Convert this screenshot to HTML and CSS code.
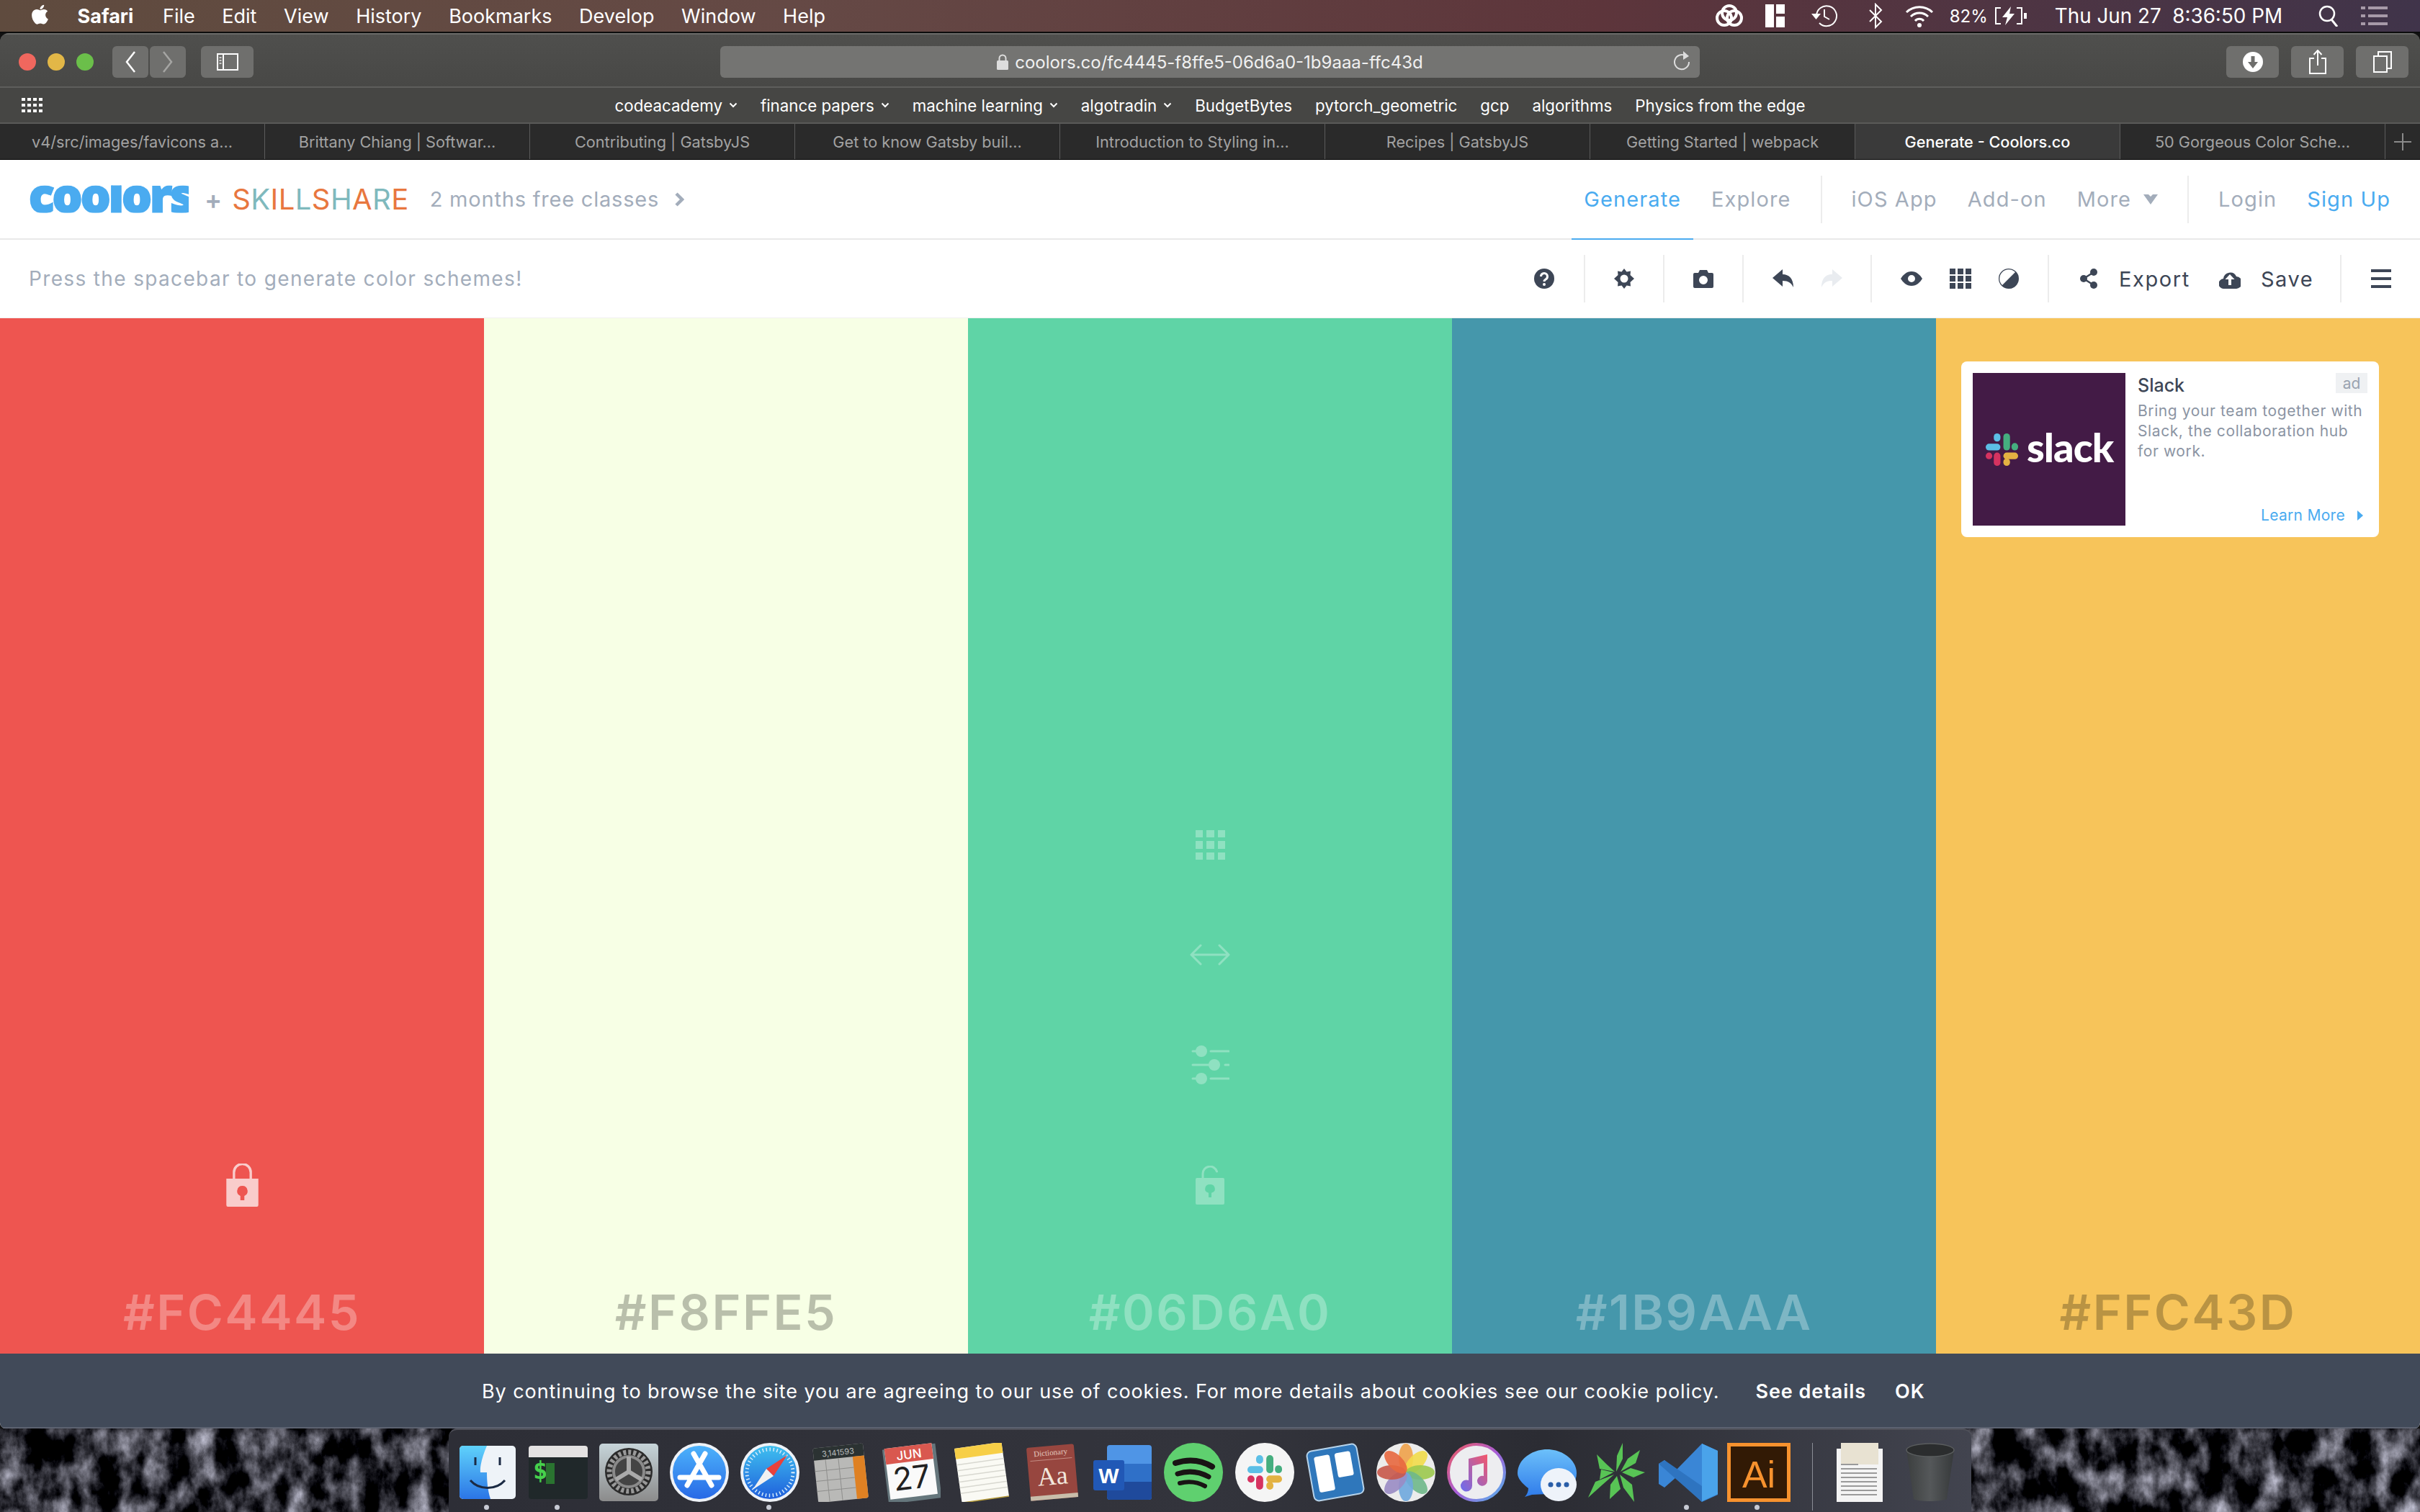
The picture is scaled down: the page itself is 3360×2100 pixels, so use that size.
FILE: index.html
```html
<!DOCTYPE html>
<html lang="en">
<head>
<meta charset="utf-8">
<title>Generate - Coolors.co</title>
<link rel="stylesheet" href="styles.css">
</head>
<body>
<svg class="defs" width="0" height="0" aria-hidden="true">
  <symbol id="slackmark" viewBox="0 0 44 44">
    <rect x="0" y="14" width="20" height="9" rx="4.5" fill="#5cbfe6"/><rect x="11" y="0" width="9" height="11" rx="4.5" fill="#5cbfe6"/>
    <rect x="24" y="0" width="9" height="23" rx="4.5" fill="#45ae7f"/><rect x="35" y="13" width="9" height="10" rx="4.5" fill="#45ae7f"/>
    <rect x="0" y="26" width="9" height="9" rx="4.5" fill="#d63360"/><rect x="11" y="26" width="9" height="18" rx="4.5" fill="#d63360"/>
    <rect x="24" y="26" width="20" height="9" rx="4.5" fill="#e3b242"/><rect x="24" y="34" width="9" height="10" rx="4.5" fill="#e3b242"/>
  </symbol>
  <symbol id="chev" viewBox="0 0 12 8"><path d="M1.5 1.5 6 6l4.5-4.5" fill="none" stroke="currentColor" stroke-width="2"/></symbol>
</svg>

<header class="menubar">
  <div class="menu-left">
    <svg class="apple" viewBox="3 3 18 18.5" width="27" height="31"><path fill="#fff" d="M17.05 20.28c-.98.95-2.05.8-3.08.35-1.09-.46-2.09-.48-3.24 0-1.44.62-2.2.44-3.06-.35C2.79 15.25 3.51 7.59 9.05 7.31c1.35.07 2.29.74 3.08.8 1.18-.24 2.31-.93 3.57-.84 1.51.12 2.65.72 3.4 1.8-3.12 1.87-2.38 5.98.48 7.13-.57 1.5-1.31 2.99-2.54 4.09zM12.03 7.25c-.15-2.23 1.66-4.07 3.74-4.25.29 2.58-2.34 4.5-3.74 4.25z"/></svg>
    <span class="menu-app">Safari</span><span>File</span><span>Edit</span><span>View</span><span>History</span><span>Bookmarks</span><span>Develop</span><span>Window</span><span>Help</span>
  </div>
  <div class="menu-right">
    <svg width="40" height="34" viewBox="0 0 40 34"><g fill="none" stroke="#fff" stroke-width="4"><circle cx="13" cy="20" r="10"/><circle cx="27" cy="20" r="10"/><circle cx="20" cy="13" r="10"/></g></svg>
    <svg class="s-layout" width="27" height="32" viewBox="0 0 27 32"><path fill="#fff" d="M0 0h12v32H0zM15 0h12v13H15zM15 17h12v15H15z"/></svg>
    <svg class="s-tm" width="38" height="34" viewBox="0 0 38 34"><path d="M8 17a14 14 0 1 1 4 10M19 8v10l7 4" fill="none" stroke="#fff" stroke-width="2"/><path d="M1 14h13l-6.500 8z" fill="#fff"/></svg>
    <svg class="s-bt" width="20" height="36" viewBox="0 0 20 36"><path d="M2 10l16 16-8 8V2l8 8L2 26" fill="none" stroke="#fff" stroke-width="2"/></svg>
    <svg class="s-wifi" width="40" height="34" viewBox="0 0 40 34"><g fill="none" stroke="#fff" stroke-width="3"><path d="M2 12a26 26 0 0 1 36 0"/><path d="M8 18a17 17 0 0 1 24 0"/><path d="M14 24a8 8 0 0 1 12 0"/></g><circle cx="20" cy="30" r="3" fill="#fff"/></svg>
    <span class="s-pct">82%</span>
    <svg class="s-batt" width="46" height="26" viewBox="0 0 46 26"><path d="M9 2H2v22h7M31 2h7v22h-7" fill="none" stroke="#fff" stroke-width="2"/><path d="M41 9h4v8h-4z" fill="#fff"/><path d="M23 0 11 15h7l-3 11 13-16h-7z" fill="#fff"/></svg>
    <span class="s-date">Thu Jun 27&nbsp;&nbsp;8:36:50 PM</span>
    <svg class="s-search" width="28" height="30" viewBox="0 0 28 30"><circle cx="12" cy="12" r="10" fill="none" stroke="#fff" stroke-width="2.500"/><path d="M18 20l8 10" stroke="#fff" stroke-width="3"/></svg>
    <svg class="s-list" width="37" height="26" viewBox="0 0 37 26"><path fill="#a79aa8" d="M0 0h6v4H0zM10 0h27v4H10zM0 11h6v4H0zM10 11h27v4H10zM0 22h6v4H0zM10 22h27v4H10z"/></svg>
  </div>
</header>

<div class="window">
  <div class="toolbar">
    <div class="tb-left">
      <i class="light red"></i><i class="light yellow"></i><i class="light green"></i>
      <button class="tb-btn nav-back"><svg width="16" height="32" viewBox="0 0 16 32"><path d="M14 2 3 16l11 14" fill="none" stroke="#fff" stroke-width="2.500"/></svg></button>
      <button class="tb-btn nav-fwd"><svg width="16" height="32" viewBox="0 0 16 32"><path d="M2 2l11 14L2 30" fill="none" stroke="#a5a5a3" stroke-width="2.500"/></svg></button>
      <button class="tb-btn wide side"><svg width="30" height="24" viewBox="0 0 30 24"><path d="M1 1h28v22H1zM9 1v22" fill="none" stroke="#fff" stroke-width="2"/><path d="M3.500 5h3v2h-3zM3.500 9h3v2h-3zM3.500 13h3v2h-3z" fill="#ccc"/></svg></button>
    </div>
    <div class="url">
      <svg width="16" height="22" viewBox="0 0 16 22"><path d="M3.500 10V6a4.500 4.500 0 0 1 9 0v4" fill="none" stroke="#ddd" stroke-width="2"/><rect y="9" width="16" height="13" rx="1.500" fill="#ddd"/></svg>
      <span>coolors.co/fc4445-f8ffe5-06d6a0-1b9aaa-ffc43d</span>
      <svg class="reload" width="24" height="28" viewBox="0 0 24 28"><path d="M16 6.500A10 10 0 1 0 21 15" fill="none" stroke="#ddd" stroke-width="2"/><path d="M13 0l8 7-8 5z" fill="#ddd"/></svg>
    </div>
    <div class="tb-right">
      <button class="tb-btn wide"><svg width="28" height="28" viewBox="0 0 28 28"><circle cx="14" cy="14" r="14" fill="#fff"/><path d="M11.500 6h5v8H21l-7 9-7-9h4.500z" fill="#6e6e6c"/></svg></button>
      <button class="tb-btn wide"><svg width="24" height="34" viewBox="0 0 24 34"><path d="M7 12H1v21h22V12h-6M12 22V2M6.500 7 12 1l5.500 6" fill="none" stroke="#fff" stroke-width="2"/></svg></button>
      <button class="tb-btn wide"><svg width="26" height="30" viewBox="0 0 26 30"><path d="M7 6V1h18v23h-6M1 7h18v22H1z" fill="none" stroke="#fff" stroke-width="2"/></svg></button>
    </div>
  </div>

  <div class="bookmarks">
    <svg class="bm-grid" width="30" height="20" viewBox="0 0 30 20"><path fill="#fff" d="M0 0h5v4H0zM8 0h5v4H8zM16 0h5v4h-5zM24 0h5v4h-5zM0 8h5v4H0zM8 8h5v4H8zM16 8h5v4h-5zM24 8h5v4h-5zM0 16h5v4H0zM8 16h5v4H8zM16 16h5v4h-5zM24 16h5v4h-5z"/></svg>
    <nav class="bm-list">
      <span>codeacademy<svg width="12" height="8"><use href="#chev"/></svg></span>
      <span>finance papers<svg width="12" height="8"><use href="#chev"/></svg></span>
      <span>machine learning<svg width="12" height="8"><use href="#chev"/></svg></span>
      <span>algotradin<svg width="12" height="8"><use href="#chev"/></svg></span>
      <span>BudgetBytes</span><span>pytorch_geometric</span><span>gcp</span><span>algorithms</span><span>Physics from the edge</span>
    </nav>
  </div>

  <div class="tabs">
    <div class="tab">v4/src/images/favicons a...</div>
    <div class="tab">Brittany Chiang | Softwar...</div>
    <div class="tab">Contributing | GatsbyJS</div>
    <div class="tab">Get to know Gatsby buil...</div>
    <div class="tab">Introduction to Styling in...</div>
    <div class="tab">Recipes | GatsbyJS</div>
    <div class="tab">Getting Started | webpack</div>
    <div class="tab active">Generate - Coolors.co</div>
    <div class="tab">50 Gorgeous Color Sche...</div>
    <div class="tab-add"><svg width="24" height="24" viewBox="0 0 24 24"><path d="M12 0v24M0 12h24" stroke="#8a8a8a" stroke-width="2"/></svg></div>
  </div>

  <main class="page">
    <div class="site-nav">
      <div class="brand">
        <span class="logo">coolors</span>
        <span class="plus">+</span>
        <span class="skill"><b class="o">S</b><b class="t">K</b><b class="o">I</b><b class="o">L</b><b class="t">L</b><b class="o">S</b><b class="t">H</b><b class="o">A</b><b class="t">R</b><b class="o">E</b></span>
        <span class="promo">2 months free classes</span>
        <svg class="promo-arrow" width="14" height="20" viewBox="0 0 14 20"><path d="M3 2l8 8-8 8" fill="none" stroke="#a3adbb" stroke-width="4.500"/></svg>
      </div>
      <nav class="site-links">
        <a class="link current">Generate</a><a class="link">Explore</a>
        <i class="vsep"></i>
        <a class="link">iOS App</a><a class="link">Add-on</a><a class="link">More<svg class="more-heart" width="20" height="14" viewBox="0 0 20 14"><path d="M0 0h7l3 3 3-3h7L10 14z" fill="#a3adbb"/></svg></a>
        <i class="vsep"></i>
        <a class="link">Login</a><a class="link blue">Sign Up</a>
      </nav>
    </div>

    <div class="tool-row">
      <span class="hint">Press the spacebar to generate color schemes!</span>
      <div class="tools">
        <div class="tg g-help"><svg width="28" height="28" viewBox="0 0 28 28"><circle cx="14" cy="14" r="14" fill="#3d4656"/><path d="M9.500 11a4.500 4.500 0 1 1 7 3.700c-1.500 1-2.500 1.600-2.500 3.300" fill="none" stroke="#fff" stroke-width="3"/><circle cx="14" cy="22" r="2" fill="#fff"/></svg></div>
        <div class="tg g-one"><svg width="28" height="28" viewBox="0 0 28 28"><path fill="#3d4656" fill-rule="evenodd" d="M14 0l3.500 4.500 5.500-1-.500 5.500L28 14l-5.500 5 .500 5.500-5.500-1L14 28l-3.500-4.500-5.500 1 .500-5.500L0 14l5.500-5-.500-5.500 5.500 1zM14 8.500a5.500 5.500 0 1 0 0 11 5.500 5.500 0 0 0 0-11z"/></svg></div>
        <div class="tg g-one"><svg width="28" height="25" viewBox="0 0 28 25"><path fill="#3d4656" fill-rule="evenodd" d="M9 0h10l2 4h5a2 2 0 0 1 2 2v17a2 2 0 0 1-2 2H2a2 2 0 0 1-2-2V6a2 2 0 0 1 2-2h5zM14 8a6 6 0 1 0 0 12 6 6 0 0 0 0-12z"/></svg></div>
        <div class="tg g-undo">
          <svg width="30" height="26" viewBox="0 0 30 26"><path fill="#3d4656" d="M14 0v7c9 0 15 6 15 18-3-6-7-9-15-9v8L0 12z"/></svg>
          <svg width="30" height="26" viewBox="0 0 30 26"><path fill="#e9ecf0" d="M16 0v7C7 7 1 13 1 25c3-6 7-9 15-9v8l14-12z"/></svg>
        </div>
        <div class="tg g-view">
          <svg width="30" height="20" viewBox="0 0 30 20"><path fill="#3d4656" fill-rule="evenodd" d="M15 0c7 0 12 5 15 10-3 5-8 10-15 10S3 15 0 10C3 5 8 0 15 0zm0 5a5 5 0 1 0 0 10 5 5 0 0 0 0-10z"/></svg>
          <svg width="30" height="28" viewBox="0 0 30 28"><path fill="#3d4656" d="M0 0h8v8H0zM11 0h8v8h-8zM22 0h8v8h-8zM0 10h8v8H0zM11 10h8v8h-8zM22 10h8v8h-8zM0 20h8v8H0zM11 20h8v8h-8zM22 20h8v8h-8z"/></svg>
          <svg width="28" height="28" viewBox="0 0 28 28"><path fill="#3d4656" fill-rule="evenodd" d="M14 0a14 14 0 1 1 0 28 14 14 0 0 1 0-28zM5 23 23 5A12 12 0 0 0 5 23z"/></svg>
        </div>
        <div class="tg g-actions">
          <svg class="ic-share" width="24" height="28" viewBox="0 0 24 28"><g fill="#3d4656"><circle cx="19" cy="5" r="5"/><circle cx="5" cy="14" r="5"/><circle cx="19" cy="23" r="5"/></g><path d="M19 5 5 14l14 9" fill="none" stroke="#3d4656" stroke-width="2.500"/></svg>
          <span class="act">Export</span>
          <svg class="ic-cloud" width="30" height="27" viewBox="0 0 30 27"><path fill="#3d4656" fill-rule="evenodd" d="M7 27a7 7 0 0 1-1-14 9.500 9.500 0 0 1 18-3 8.500 8.500 0 0 1-1 17zM15 7l-6.500 7H13v8h4v-8h4.500z"/></svg>
          <span class="act">Save</span>
        </div>
        <div class="tg g-menu"><svg width="28" height="26" viewBox="0 0 28 26"><path fill="#3d4656" d="M0 0h28v4H0zM0 11h28v4H0zM0 22h28v4H0z"/></svg></div>
      </div>
    </div>

    <section class="palette">
      <div class="col c1">
        <svg class="lock lock-on" width="45" height="60" viewBox="0 0 40 54"><path fill="#fff" fill-rule="evenodd" d="M8 19v-8a12 12 0 0 1 24 0v8h8v33a2 2 0 0 1-2 2H2a2 2 0 0 1-2-2V19zm3 0h18v-8a9 9 0 0 0-18 0zM20 28a6.500 6.500 0 0 0-2.500 12.500V46h5v-5.500A6.500 6.500 0 0 0 20 28z"/></svg>
        <div class="hex light-t">#FC4445</div>
      </div>
      <div class="col c2"><div class="hex dark-t">#F8FFE5</div></div>
      <div class="col c3">
        <svg class="tool t-grid" width="41" height="41" viewBox="0 0 41 41"><path fill="#fff" d="M0 0h10v10H0zM15 0h11v10H15zM31 0h10v10H31zM0 15h10v11H0zM15 15h11v11H15zM31 15h10v11H31zM0 31h10v10H0zM15 31h11v10H15zM31 31h10v10H31z"/></svg>
        <svg class="tool t-arrow" width="56" height="30" viewBox="0 0 56 30"><path d="M15 2 2 15l13 13M41 2l13 13-13 13M2 15h52" fill="none" stroke="#fff" stroke-width="3" stroke-linecap="round" stroke-linejoin="round"/></svg>
        <svg class="tool t-sliders" width="53" height="54" viewBox="0 0 53 54"><g stroke="#fff" stroke-width="3" stroke-linecap="round"><path d="M2 8h6M27 8h25M2 27h25M47 27h5M2 46h6M27 46h25"/></g><g fill="#fff"><circle cx="14" cy="8" r="8"/><circle cx="32" cy="27" r="8"/><circle cx="14" cy="46" r="8"/></g></svg>
        <svg class="tool t-lock" width="40" height="54" viewBox="0 0 40 54"><path d="M10 17v-6a10 10 0 0 1 19.500-3" fill="none" stroke="#fff" stroke-width="3" stroke-linecap="round"/><path fill="#fff" fill-rule="evenodd" d="M2 17h36a2 2 0 0 1 2 2v33a2 2 0 0 1-2 2H2a2 2 0 0 1-2-2V19a2 2 0 0 1 2-2zM20 26a7 6 0 0 0-2 11.700V44h4v-6.300A7 6 0 0 0 20 26z"/></svg>
        <div class="hex light-t">#06D6A0</div>
      </div>
      <div class="col c4"><div class="hex light-t">#1B9AAA</div></div>
      <div class="col c5">
        <aside class="ad">
          <div class="ad-img"><svg width="45" height="45"><use href="#slackmark"/></svg><span class="ad-slack">slack</span></div>
          <div class="ad-body">
            <div class="ad-head"><span class="ad-title">Slack</span><span class="ad-tag">ad</span></div>
            <p class="ad-desc">Bring your team together with<br>Slack, the collaboration hub<br>for work.</p>
            <div class="ad-more">Learn More<svg width="8" height="14" viewBox="0 0 8 14"><path d="M0 0l8 7-8 7z" fill="#4aabf0"/></svg></div>
          </div>
        </aside>
        <div class="hex dark-t">#FFC43D</div>
      </div>
    </section>

    <div class="cookie">
      <span>By continuing to browse the site you are agreeing to our use of cookies. For more details about cookies see our cookie policy.</span>
      <a class="ck-link">See details</a><a class="ck-link">OK</a>
    </div>
  </main>
</div>

<footer class="desk">
  <svg class="rock" width="3360" height="116" aria-hidden="true">
    <filter id="rockf" x="0" y="0" width="100%" height="100%" color-interpolation-filters="sRGB">
      <feTurbulence type="fractalNoise" baseFrequency=".03 .02" numOctaves="6" seed="23"/>
      <feColorMatrix type="matrix" values="1.5 0 0 0 -.58  1.5 0 0 0 -.58  1.6 0 0 0 -.6  0 0 0 0 1"/>
    </filter>
    <rect width="3360" height="116" filter="url(#rockf)"/>
  </svg>
  <div class="dock">
    <svg class="di" viewBox="0 0 82 82"><defs><linearGradient id="fb" x1="0" y1="0" x2="0" y2="1"><stop offset="0" stop-color="#5fd2fb"/><stop offset="1" stop-color="#2b75e6"/></linearGradient></defs><rect x="2" y="4" width="78" height="74" rx="5" fill="#eef3f8"/><path d="M7 4h33c-6 14-10 28-9 37h9c0 12 1 24 5 37H7a5 5 0 0 1-5-5V9a5 5 0 0 1 5-5z" fill="url(#fb)"/><path d="M24 20v11M58 20v11" stroke="#1b2a44" stroke-width="3"/><path d="M17 52c12 14 36 14 48 0" fill="none" stroke="#1b2a44" stroke-width="3"/></svg>
    <svg class="di" viewBox="0 0 82 82"><rect y="4" width="82" height="74" rx="4" fill="#20282a"/><path d="M4 4h74a4 4 0 0 1 4 4v12H0V8a4 4 0 0 1 4-4z" fill="#e4e2e2"/><text x="6" y="50" class="t-term">$</text><rect x="24" y="28" width="12" height="29" fill="#2a7430"/></svg>
    <svg class="di" viewBox="0 0 82 82"><defs><linearGradient id="sp" x1="0" y1="0" x2="0" y2="1"><stop offset="0" stop-color="#c6d4d9"/><stop offset="1" stop-color="#8b8b8b"/></linearGradient></defs><rect width="82" height="80" y="1" rx="5" fill="url(#sp)"/><circle cx="41" cy="40" r="33" fill="#2b2b2b"/><circle cx="41" cy="40" r="27" fill="none" stroke="#999" stroke-width="7" stroke-dasharray="4 3"/><circle cx="41" cy="40" r="21" fill="#444" stroke="#8a8a8a" stroke-width="4"/><path d="M41 40V19M41 40 23 51M41 40l18 11" stroke="#aaa" stroke-width="6"/></svg>
    <svg class="di" viewBox="0 0 82 82"><defs><linearGradient id="as" x1="0" y1="0" x2="0" y2="1"><stop offset="0" stop-color="#4cb2fb"/><stop offset="1" stop-color="#2869e6"/></linearGradient></defs><circle cx="41" cy="41" r="41" fill="#eef2f7"/><circle cx="41" cy="41" r="37" fill="url(#as)"/><path d="M33 15l25 44M49 15 24 59M14 48h54" stroke="#fff" stroke-width="7" stroke-linecap="round"/></svg>
    <svg class="di" viewBox="0 0 82 82"><defs><linearGradient id="sf" x1="0" y1="0" x2="0" y2="1"><stop offset="0" stop-color="#3fc0ef"/><stop offset="1" stop-color="#1f5fdc"/></linearGradient></defs><circle cx="41" cy="41" r="41" fill="#eef2f7"/><circle cx="41" cy="41" r="37" fill="url(#sf)"/><circle cx="41" cy="41" r="32" fill="none" stroke="#d6ecfb" stroke-width="5" stroke-dasharray="1.500 3.500"/><path d="M65 17 46 46 36 36z" fill="#e8413c"/><path d="M17 65l19-29 10 10z" fill="#f1f1f1"/></svg>
    <svg class="di" viewBox="0 0 82 82"><g transform="rotate(-6 41 41)"><rect x="6" y="4" width="70" height="76" rx="3" fill="#b9b9b7"/><path d="M6 7a3 3 0 0 1 3-3h64a3 3 0 0 1 3 3v14H6z" fill="#2b3232"/><path d="M60 21h16v56a3 3 0 0 1-3 3H60z" fill="#df8123"/><text x="18" y="17" class="t-calc">3,141593</text><path d="M6 36h54M6 50h54M6 64h54M22 21v59M40 21v59" stroke="#8e8e8c" stroke-width="1"/></g></svg>
    <svg class="di" viewBox="0 0 82 82"><g transform="rotate(-7 41 41)"><rect x="5" y="5" width="74" height="76" fill="#65767c"/><rect x="8" y="4" width="66" height="71" fill="#fafafa"/><rect x="8" y="4" width="66" height="22" fill="#d9584f"/><text x="41" y="22" class="t-jun">JUN</text><text x="41" y="64" class="t-27">27</text></g></svg>
    <svg class="di" viewBox="0 0 82 82"><g transform="rotate(-8 41 41)"><rect x="8" y="3" width="66" height="76" fill="#fafaf4"/><rect x="8" y="3" width="66" height="15" fill="#f7cf47"/><path d="M8 26h66M8 34h66M8 42h66M8 50h66M8 58h66M8 66h66" stroke="#d8d8d0" stroke-width="1.500"/><path d="M8 79h66" stroke="#b59b3b" stroke-width="1.500"/></g></svg>
    <svg class="di" viewBox="0 0 82 82"><g transform="rotate(-5 41 41)"><rect x="8" y="4" width="66" height="74" rx="3" fill="#97463f"/><path d="M8 72h66v6H8z" fill="#c8bdaa"/><text x="41" y="17" class="t-dict">Dictionary</text><path d="M12 23h58" stroke="#c48d84" stroke-width="1"/><text x="41" y="58" class="t-aa">Aa</text></g></svg>
    <svg class="di" viewBox="0 0 82 82"><rect x="19" y="3" width="62" height="76" rx="4" fill="#4f95e6"/><rect x="19" y="29" width="62" height="26" fill="#2f70c8"/><path d="M19 54h62v21a4 4 0 0 1-4 4H23a4 4 0 0 1-4-4z" fill="#1f4a9c"/><rect y="24" width="43" height="42" rx="3" fill="#2158b6"/><text x="21.500" y="56" class="t-w">W</text></svg>
    <svg class="di" viewBox="0 0 82 82"><circle cx="41" cy="41" r="41" fill="#5fd06f"/><g fill="none" stroke="#191414" stroke-linecap="round"><path d="M16 28c18-6 36-4 51 5" stroke-width="8"/><path d="M19 43c15-5 30-3 43 4" stroke-width="7"/><path d="M22 56c12-3 24-2 35 4" stroke-width="6"/></g></svg>
    <svg class="di" viewBox="0 0 82 82"><circle cx="41" cy="41" r="41" fill="#f5f5f5"/><use href="#slackmark" x="17" y="17" width="48" height="48"/></svg>
    <svg class="di" viewBox="0 0 82 82"><g transform="rotate(-10 41 41)"><rect x="6" y="6" width="70" height="70" rx="7" fill="#2f77bb" stroke="#b7d3ea" stroke-width="2"/><rect x="15" y="15" width="22" height="50" rx="3" fill="#fff"/><rect x="44" y="15" width="22" height="34" rx="3" fill="#fff"/></g></svg>
    <svg class="di" viewBox="0 0 82 82"><circle cx="41" cy="41" r="41" fill="#ececec"/><g transform="translate(41 41)"><ellipse cy="-20" rx="10" ry="20" fill="#f0a24a" opacity=".9"/><ellipse cy="-20" rx="10" ry="20" fill="#f2dc4a" opacity=".9" transform="rotate(45)"/><ellipse cy="-20" rx="10" ry="20" fill="#9cc94e" opacity=".9" transform="rotate(90)"/><ellipse cy="-20" rx="10" ry="20" fill="#6fb88a" opacity=".9" transform="rotate(135)"/><ellipse cy="-20" rx="10" ry="20" fill="#6fa8de" opacity=".9" transform="rotate(180)"/><ellipse cy="-20" rx="10" ry="20" fill="#9a8cc4" opacity=".9" transform="rotate(225)"/><ellipse cy="-20" rx="10" ry="20" fill="#c8584a" opacity=".9" transform="rotate(270)"/><ellipse cy="-20" rx="10" ry="20" fill="#e8683f" opacity=".9" transform="rotate(315)"/></g></svg>
    <svg class="di" viewBox="0 0 82 82"><defs><linearGradient id="it" x1="0" y1="0" x2="1" y2="1"><stop offset="0" stop-color="#ef5a5e"/><stop offset=".5" stop-color="#a85ed8"/><stop offset="1" stop-color="#4fb6ee"/></linearGradient><linearGradient id="nt" x1="1" y1="0" x2="0" y2="1"><stop offset="0" stop-color="#f5566a"/><stop offset="1" stop-color="#6a6cf0"/></linearGradient></defs><circle cx="41" cy="41" r="39" fill="#ededf0" stroke="url(#it)" stroke-width="4"/><path d="M30 22l26-6v37a7 7 0 1 1-5-7V28l-16 4v27a8 8 0 1 1-5-7z" fill="url(#nt)"/></svg>
    <svg class="di" viewBox="0 0 82 82"><defs><linearGradient id="ms" x1="0" y1="0" x2="0" y2="1"><stop offset="0" stop-color="#6cc0fa"/><stop offset="1" stop-color="#2f7bea"/></linearGradient></defs><path d="M41 9c22 0 41 15 41 33 0 12-8 22-20 28l-42 2-10 3c3-3 5-7 5-12C6 56 0 49 0 42 0 24 19 9 41 9z" fill="url(#ms)"/><ellipse cx="57" cy="58" rx="25" ry="23" fill="#eef3fa"/><g fill="#2a5ea8"><circle cx="46" cy="58" r="3.500"/><circle cx="57" cy="58" r="3.500"/><circle cx="68" cy="58" r="3.500"/></g></svg>
    <svg class="di" viewBox="0 0 82 82"><g fill="#58c455"><path d="M39 40l1-22 8-18 0 22z"/><path d="M37 40 26 30 12 16l4 20z"/><path d="M45 40l10-18 17-12-6 18z"/><path d="M36 44 20 58 0 76l10-22z"/><path d="M44 44l5 18 15 20-3-24z"/><path d="M35 41 18 37l-2 14z"/><path d="M47 41l12-6 20 6-16 7z"/><path d="M40 46l-9 12-1 20 15-14z"/></g></svg>
    <svg class="di" viewBox="0 0 82 82"><path d="M60 1 24 38 8 24 0 29v28l8 5 16-14 36 34 22-10V11z" fill="#3a86d6"/><path d="M60 1v80l22-10V11z" fill="#4aa3ea"/><path d="M0 29l60 53V60L8 24z" fill="#2e74c0"/></svg>
    <svg class="di ai" viewBox="0 0 88 82"><rect width="88" height="82" fill="#f7922e"/><rect x="5" y="5" width="78" height="72" fill="#321a05"/><text x="44" y="62" class="t-ai">Ai</text></svg>
    <i class="dock-sep"></i>
    <svg class="di doc" viewBox="0 0 64 82"><rect y="8" width="64" height="74" fill="#f4f4f4"/><rect x="6" width="52" height="30" fill="#e8e2d2"/><path d="M6 30h24M6 36h50M6 42h50M6 48h50M6 54h50M6 60h50M6 66h50M6 72h50" stroke="#9a9a9a" stroke-width="2"/></svg>
    <svg class="di trash" viewBox="0 0 68 82"><defs><linearGradient id="tr" x1="0" y1="0" x2="1" y2="0"><stop offset="0" stop-color="#3c3f3f"/><stop offset=".5" stop-color="#55585a"/><stop offset="1" stop-color="#36393a"/></linearGradient></defs><path d="M1 10l10 68c4 4 40 4 46 0l10-68z" fill="url(#tr)"/><ellipse cx="34" cy="10" rx="33" ry="9" fill="#2b2d2e" stroke="#5a5d5e" stroke-width="1.500"/></svg>
    <i class="dot d1"></i><i class="dot d2"></i><i class="dot d3"></i><i class="dot d4"></i><i class="dot d5"></i>
  </div>
</footer>
</body>
</html>
```

FILE: styles.css
```css
* { box-sizing: border-box; }
html, body { margin: 0; padding: 0; }
body {
  width: 3360px;
  height: 2100px;
  overflow: hidden;
  display: flex;
  flex-direction: column;
  font-family: "Inter", "Liberation Sans", sans-serif;
  background: #111;
}
.defs { position: absolute; }

/* menu bar */
.menubar {
  height: 46px;
  flex: none;
  display: flex;
  align-items: center;
  justify-content: space-between;
  color: #fff;
  font-size: 27px;
  background: linear-gradient(90deg, #5f4b3e 0%, #654945 33%, #5d353b 66%, #40344a 100%);
  border-bottom: 2px solid #0c0c0c;
}
.menu-left { display: flex; align-items: center; gap: 37.600px; padding-left: 42px; }
.apple { margin-top: -4px; margin-right: 1px; }
.menu-app { font-weight: 700; margin-right: 3px; }
.menu-right { display: flex; align-items: center; padding-right: 45px; font-size: 27.800px; }
.menu-right svg { flex: none; }
.s-layout { margin-left: 30px; }
.s-tm { margin-left: 36px; }
.s-bt { margin-left: 42px; }
.s-wifi { margin-left: 31px; }
.s-pct { margin-left: 22px; font-size: 24px; }
.s-batt { margin-left: 9px; }
.s-date { margin-left: 38px; }
.s-search { margin-left: 50px; }
.s-list { margin-left: 31px; }

/* window chrome */
.window {
  flex: none;
  height: 1938px;
  display: flex;
  flex-direction: column;
  border-radius: 12px 12px 8px 8px;
  overflow: hidden;
  background: #444;
}
.toolbar {
  height: 76px;
  flex: none;
  display: grid;
  grid-template-columns: 1000px 1360px 1fr;
  align-items: center;
  padding-top: 16px;
  padding-bottom: 14px;
  background: linear-gradient(#4f4f4d, #484846);
  border-top: 2px solid #6b6b69;
  border-bottom: 2px solid #5e5e5c;
}
.tb-left { display: flex; align-items: center; padding-left: 26px; }
.light { width: 24px; height: 24px; border-radius: 50%; margin-right: 16px; }
.red { background: #f0675e; }
.yellow { background: #e2b747; }
.green { background: #6bbf4a; margin-right: 26px; }
.tb-btn {
  width: 50px;
  height: 44px;
  padding: 0;
  border: 0;
  border-radius: 6px;
  background: #6f6f6d;
  display: flex;
  align-items: center;
  justify-content: center;
}
.tb-btn.wide { width: 73px; }
.nav-fwd { margin-left: 2px; }
.side { margin-left: 21px; }
.url {
  height: 44px;
  position: relative;
  display: flex;
  align-items: center;
  justify-content: center;
  gap: 9px;
  border-radius: 6px;
  background: #747472;
  color: #f0f0f0;
  font-size: 24px;
}
.reload { position: absolute; right: 12px; top: 7px; }
.tb-right { display: flex; justify-content: flex-end; gap: 17px; padding-right: 16px; }

.bookmarks {
  height: 50px;
  flex: none;
  display: grid;
  grid-template-columns: 1fr auto 1fr;
  align-items: center;
  background: #464644;
  border-bottom: 2px solid #5a5a58;
}
.bm-grid { margin-left: 30px; }
.bm-list { display: flex; gap: 32px; color: #fff; font-size: 22.300px; }
.bm-list span { display: flex; align-items: center; gap: 9px; white-space: nowrap; }

.tabs {
  height: 50px;
  flex: none;
  display: flex;
  background: #2a2a2a;
  border-bottom: 1px solid #000;
}
.tab {
  width: 368px;
  flex: none;
  display: flex;
  align-items: center;
  justify-content: center;
  color: #a2a2a2;
  font-size: 21.700px;
  white-space: nowrap;
  border-right: 1px solid #5b5b5b;
}
.tab.active { background: #3a3a3a; color: #fff; font-weight: 500; }
.tab-add { flex: 1; display: flex; align-items: center; justify-content: center; }

/* page */
.page {
  flex: 1;
  min-height: 0;
  display: flex;
  flex-direction: column;
  background: #fff;
  color: #3d4656;
}
.site-nav {
  height: 111px;
  flex: none;
  display: flex;
  justify-content: space-between;
  border-bottom: 2px solid #e9e9e9;
}
.brand { display: flex; align-items: center; padding-left: 40px; }
.logo {
  display: block;
  width: 222px;
  height: 38px;
  font-family: "Open Sans", sans-serif;
  font-weight: 800;
  font-size: 66px;
  line-height: 22px;
  color: #4aabf0;
  letter-spacing: -3px;
  white-space: nowrap;
  -webkit-text-stroke: 2px #4aabf0;
  clip-path: inset(0);
}
.plus { margin-left: 22px; color: #a3adbb; font-size: 36px; font-weight: 600; line-height: 1; }
.skill { margin-left: 14px; font-size: 40px; letter-spacing: .4px; line-height: 1; }
.skill b { font-weight: 400; }
.skill .o { color: #e8773f; }
.skill .t { color: #7fb9bd; }
.promo { margin-left: 29px; font-size: 29px; color: #a3adbb; letter-spacing: .8px; }
.promo-arrow { margin-left: 21px; }
.site-links { display: flex; align-items: stretch; font-size: 29px; color: #a3adbb; padding-right: 20px; }
.link {
  display: flex;
  align-items: center;
  padding: 0 21px;
  margin-bottom: -2px;
  border-bottom: 2px solid transparent;
  letter-spacing: 1.100px;
  white-space: nowrap;
}
.link.current { color: #4aabf0; border-bottom-color: #4aabf0; padding: 0 17px; margin-right: 4px; }
.link.blue { color: #4aabf0; }
.more-heart { margin-left: 17px; }
.vsep { width: 2px; height: 66px; margin: 0 20px; background: #ececec; align-self: center; flex: none; }

.tool-row {
  height: 109px;
  flex: none;
  display: flex;
  align-items: center;
  justify-content: space-between;
  border-bottom: 1px solid #f0f0f0;
}
.hint { margin-left: 40px; font-size: 28px; color: #a3adbb; letter-spacing: 1.350px; }
.tools { display: flex; align-items: center; }
.tg {
  height: 66px;
  display: flex;
  align-items: center;
  justify-content: center;
  border-right: 2px solid #ececec;
}
.g-help { width: 112px; }
.g-one { width: 110px; }
.g-undo { width: 178px; gap: 37px; }
.g-view { width: 246px; gap: 38px; }
.g-actions { width: 406px; justify-content: flex-start; padding-left: 43px; font-size: 29px; }
.g-menu { width: 109px; border-right: 0; }
.act { white-space: nowrap; letter-spacing: 1.600px; margin-left: 30px; }
.ic-cloud { margin-left: 40px; }
.ic-cloud + .act { margin-left: 28px; }

/* colour columns */
.palette { flex: none; height: 1438px; display: flex; }
.col {
  width: 672px;
  flex: none;
  display: flex;
  flex-direction: column;
  align-items: center;
  justify-content: flex-end;
  padding-bottom: 24px;
}
.c1 { background: #ee5550; }
.c2 { background: #f7ffe5; }
.c3 { background: #5fd4a6; }
.c4 { background: #4597ab; }
.c5 { background: #f7c45a; }
.hex {
  font-size: 68px;
  line-height: 68px;
  font-weight: 600;
  letter-spacing: 2.500px;
  white-space: nowrap;
}
.light-t { color: rgba(255, 255, 255, .3); }
.dark-t { color: rgba(0, 0, 0, .25); }
.lock-on { opacity: .7; margin-bottom: 112px; }
.tool { opacity: .3; flex: none; }
.t-grid { margin-bottom: 117px; }
.t-arrow { margin-bottom: 111px; }
.t-sliders { margin-bottom: 113px; }
.t-lock { margin-bottom: 115px; }

.c5 .hex { margin-top: auto; }
.ad {
  align-self: flex-start;
  margin: 60px 0 0 35px;
  width: 580px;
  height: 244px;
  padding: 16px;
  display: flex;
  gap: 17px;
  background: #fff;
  border-radius: 8px;
}
.ad-img {
  width: 212px;
  height: 212px;
  flex: none;
  background: #431b46;
  display: flex;
  align-items: center;
  gap: 12px;
  padding-left: 18px;
}
.ad-slack {
  font-family: "Lato", sans-serif;
  font-size: 56px;
  font-weight: 900;
  color: #fff;
  letter-spacing: -1px;
  margin-top: -8px;
}
.ad-body { flex: 1; min-width: 0; display: flex; flex-direction: column; }
.ad-head { display: flex; justify-content: space-between; align-items: flex-start; }
.ad-title { font-size: 25px; color: #3d4656; font-weight: 500; margin-top: 2px; }
.ad-tag {
  width: 44px;
  height: 28px;
  background: #eff1f3;
  color: #9aa3b0;
  font-size: 21px;
  display: flex;
  align-items: center;
  justify-content: center;
}
.ad-desc { margin: 7px 0 0; font-size: 21px; line-height: 28px; color: #8b94a3; letter-spacing: .6px; white-space: nowrap; }
.ad-more {
  margin-top: auto;
  padding-bottom: 2px;
  display: flex;
  align-items: center;
  justify-content: flex-end;
  gap: 17px;
  padding-right: 6px;
  color: #4aabf0;
  font-size: 21px;
  letter-spacing: .3px;
}

.cookie {
  flex: 1;
  display: flex;
  align-items: center;
  padding-left: 669px;
  padding-top: 2px;
  color: #fff;
  font-size: 27px;
  letter-spacing: .93px;
  background: #414a59;
  white-space: nowrap;
  border-bottom: 2px solid #5c6270;
}
.ck-link { margin-left: 50px; font-weight: 600; }
.ck-link + .ck-link { margin-left: 40px; }

/* desktop and dock */
.desk {
  flex: 1;
  min-height: 0;
  position: relative;
  display: flex;
  justify-content: center;
  background-color: #1f2023;
}
.rock { position: absolute; left: 0; top: 0; }
.dock {
  width: 2114px;
  position: relative;
  display: flex;
  align-items: flex-start;
  padding: 18px 0 0 13px;
  border-radius: 12px 12px 0 0;
  background: linear-gradient(90deg, #2d2e36 0%, #33343c 50%, #2b2c33 72%, #42444f 100%);
  border-top: 2px solid #50515a;
}
.di { width: 82px; height: 82px; flex: none; margin-right: 16.050px; }
.di.ai { width: 88px; margin-left: -3px; margin-right: 13px; }
.di.doc { width: 64px; margin-left: 33px; margin-right: 32px; }
.di.trash { width: 68px; margin-right: 0; }
.dock-sep { width: 1px; height: 94px; background: #8a8d96; flex: none; margin-left: 17px; }
.dot { position: absolute; top: 104px; width: 7px; height: 7px; border-radius: 50%; background: #c7cad4; }
.d1 { left: 49px; }
.d2 { left: 147px; }
.d3 { left: 441px; }
.d4 { left: 1715px; }
.d5 { left: 1813px; }

/* text inside dock icons */
.t-term { font: 700 34px "DejaVu Sans Mono", monospace; fill: #46d24c; }
.t-calc { font: 11px "Inter", sans-serif; fill: #b9bdbd; }
.t-jun { font: 500 17px "Inter", sans-serif; fill: #fff; text-anchor: middle; }
.t-27 { font: 400 44px "Inter", sans-serif; fill: #222; text-anchor: middle; }
.t-dict { font: 11px "Liberation Serif", serif; fill: #e3c9bf; text-anchor: middle; }
.t-aa { font: 36px "Liberation Serif", serif; fill: #f2e6dc; text-anchor: middle; }
.t-w { font: 700 30px "Liberation Sans", sans-serif; fill: #fff; text-anchor: middle; }
.t-ai { font: 400 52px "Liberation Sans", sans-serif; fill: #f7922e; text-anchor: middle; }
```
